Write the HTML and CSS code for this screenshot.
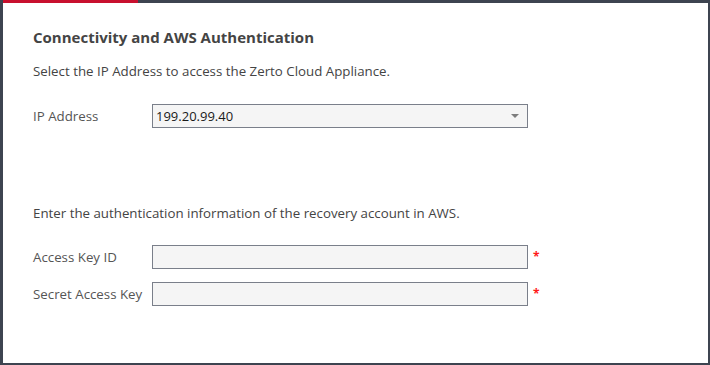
FILE: index.html
```html
<!DOCTYPE html>
<html lang="en">
<head>
    <meta charset="UTF-8">
    <title>Connectivity and AWS Authentication</title>
    <link rel="stylesheet" href="styles.css">
</head>
<body>
    <div class="frame">
        <div class="tab-marker"></div>

        <h2 class="title">Connectivity and AWS Authentication</h2>

        <!-- IP -->
        <p class="hint">Select the IP Address to access the Zerto Cloud Appliance.</p>
        <div class="row row-ip">
            <label class="label">IP Address</label>
            <div class="field select">
                <span>199.20.99.40</span>
                <span class="arrow"></span>
            </div>
        </div>

        <!-- AWS -->
        <p class="hint hint-aws">Enter the authentication information of the recovery account in AWS.</p>
        <div class="row row-key">
            <label class="label">Access Key ID</label>
            <div class="field"></div>
            <span class="required">*</span>
        </div>
        <div class="row row-tight">
            <label class="label">Secret Access Key</label>
            <div class="field"></div>
            <span class="required">*</span>
        </div>
    </div>
</body>
</html>
```

FILE: styles.css
```css
body {
    margin: 0;
    font-family: "Open Sans", "Noto Sans", sans-serif;
    background: #ffffff;
}

.frame {
    position: relative;
    box-sizing: border-box;
    width: 710px;
    height: 365px;
    border-style: solid;
    border-color: #3d4450;
    border-width: 3px 2px 2px 3px;
    padding: 24px 0 0 30px;
    background: #ffffff;
}

.tab-marker {
    position: absolute;
    top: -3px;
    left: 0;
    width: 135px;
    height: 3px;
    background: #c8102e;
}

.title {
    margin: 0;
    font-size: 15px;
    font-weight: 700;
    color: #444444;
    line-height: 20px;
}

.hint {
    margin: 15px 0 0 0;
    font-size: 13.3px;
    color: #444444;
    line-height: 18px;
}

.hint-aws {
    margin-top: 76px;
}

.row {
    display: flex;
    align-items: center;
}

.row-ip {
    margin-top: 24px;
}

.row-key {
    margin-top: 23px;
}

.row-tight {
    margin-top: 13px;
}

.label {
    width: 119px;
    font-size: 13.3px;
    color: #555555;
}

.field {
    box-sizing: border-box;
    width: 376px;
    height: 24px;
    border: 1px solid #7a7f8a;
    background: #f5f5f5;
}

.select {
    display: flex;
    align-items: center;
    justify-content: space-between;
    padding: 0 8px 0 3px;
    font-size: 13px;
    color: #1a1a1a;
}

.arrow {
    width: 0;
    height: 0;
    border-left: 4px solid transparent;
    border-right: 4px solid transparent;
    border-top: 4px solid #7d7d7d;
}

.required {
    margin-left: 5px;
    margin-top: -2px;
    font-size: 12px;
    font-weight: 700;
    color: #ff1a1a;
}
```
